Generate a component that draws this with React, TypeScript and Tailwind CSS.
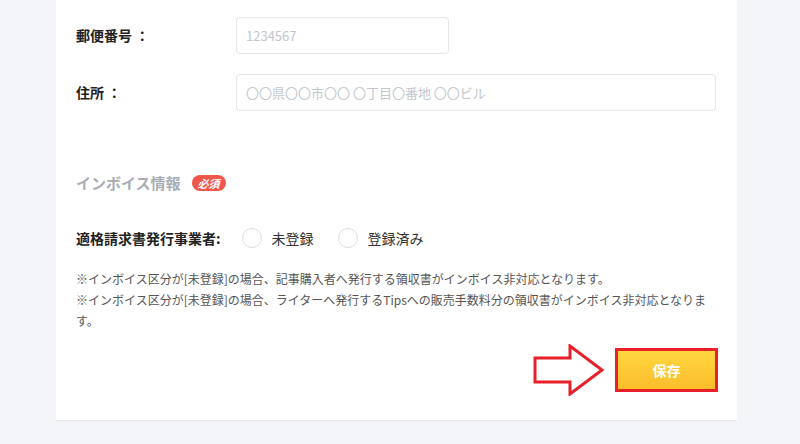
import React from "react";

const font = {
  fontFamily: "'Noto Sans CJK JP', 'Noto Sans', sans-serif",
};

function Field({ label, placeholder, wide }: { label: string; placeholder: string; wide?: boolean }) {
  return (
    <div className="flex items-center h-[37px]">
      <div className="w-[160px] text-[14px] font-bold text-[#222]">{label}</div>
      <input
        className={`h-[37px] ${wide ? "w-[480px]" : "w-[213px]"} rounded-[4px] border border-[#e4e6ea] px-[9px] text-[13px] text-[#333] placeholder:text-[#c3c7cd] outline-none`}
        placeholder={placeholder}
        style={font}
      />
    </div>
  );
}

function Radio({ label }: { label: string }) {
  return (
    <label className="flex items-center gap-[10px] text-[14px] text-[#333]">
      <span className="w-[20px] h-[20px] rounded-full border border-[#dcdfe4] bg-white" />
      {label}
    </label>
  );
}

export default function App() {
  return (
    <div className="w-full h-[444px] bg-[#f4f5f8] flex pl-[56px]" style={font}>
      <div className="w-[681px] h-[421px] bg-white border-b border-[#e6e8eb] pl-[20px] pt-[17px] flex flex-col">
        <Field label="郵便番号 ：" placeholder="1234567" />
        <div className="mt-[20px]">
          <Field label="住所 ：" placeholder="〇〇県〇〇市〇〇 〇丁目〇番地 〇〇ビル" wide />
        </div>

        {/* インボイス */}
        <div className="mt-[60px] h-[24px] flex items-center gap-[11px]">
          <span className="text-[15px] font-bold text-[#a9adb3]">インボイス情報</span>
          <span className="h-[16px] px-[6px] rounded-full bg-[#f0584c] text-white text-[11px] font-bold italic leading-[16px]">
            必須
          </span>
        </div>

        <div className="mt-[31px] h-[24px] flex items-center">
          <span className="text-[14px] font-bold text-[#222] mr-[21px]">適格請求書発行事業者:</span>
          <div className="flex items-center gap-[24px]">
            <Radio label="未登録" />
            <Radio label="登録済み" />
          </div>
        </div>

        <div className="mt-[18px] w-[640px] text-[12px] leading-[21px] text-[#555]">
          <p>※インボイス区分が[未登録]の場合、記事購入者へ発行する領収書がインボイス非対応となります。</p>
          <p>※インボイス区分が[未登録]の場合、ライターへ発行するTipsへの販売手数料分の領収書がインボイス非対応となります。</p>
        </div>

        <div className="mt-[13px] w-[642px] flex justify-end items-center gap-[10px]">
          <svg width="72" height="52" viewBox="0 0 72 52">
            <polygon
              points="2,14 37,14 37,2 69,26 37,50 37,38 2,38"
              fill="#fff"
              stroke="#e8202a"
              strokeWidth="3"
              strokeLinejoin="miter"
            />
          </svg>
          <button
            className="w-[103px] h-[44px] border-[3px] border-[#e8202a] bg-gradient-to-b from-[#ffd740] to-[#fbbd2a] text-white text-[14px] font-bold"
            style={font}
          >
            保存
          </button>
        </div>
      </div>
    </div>
  );
}
